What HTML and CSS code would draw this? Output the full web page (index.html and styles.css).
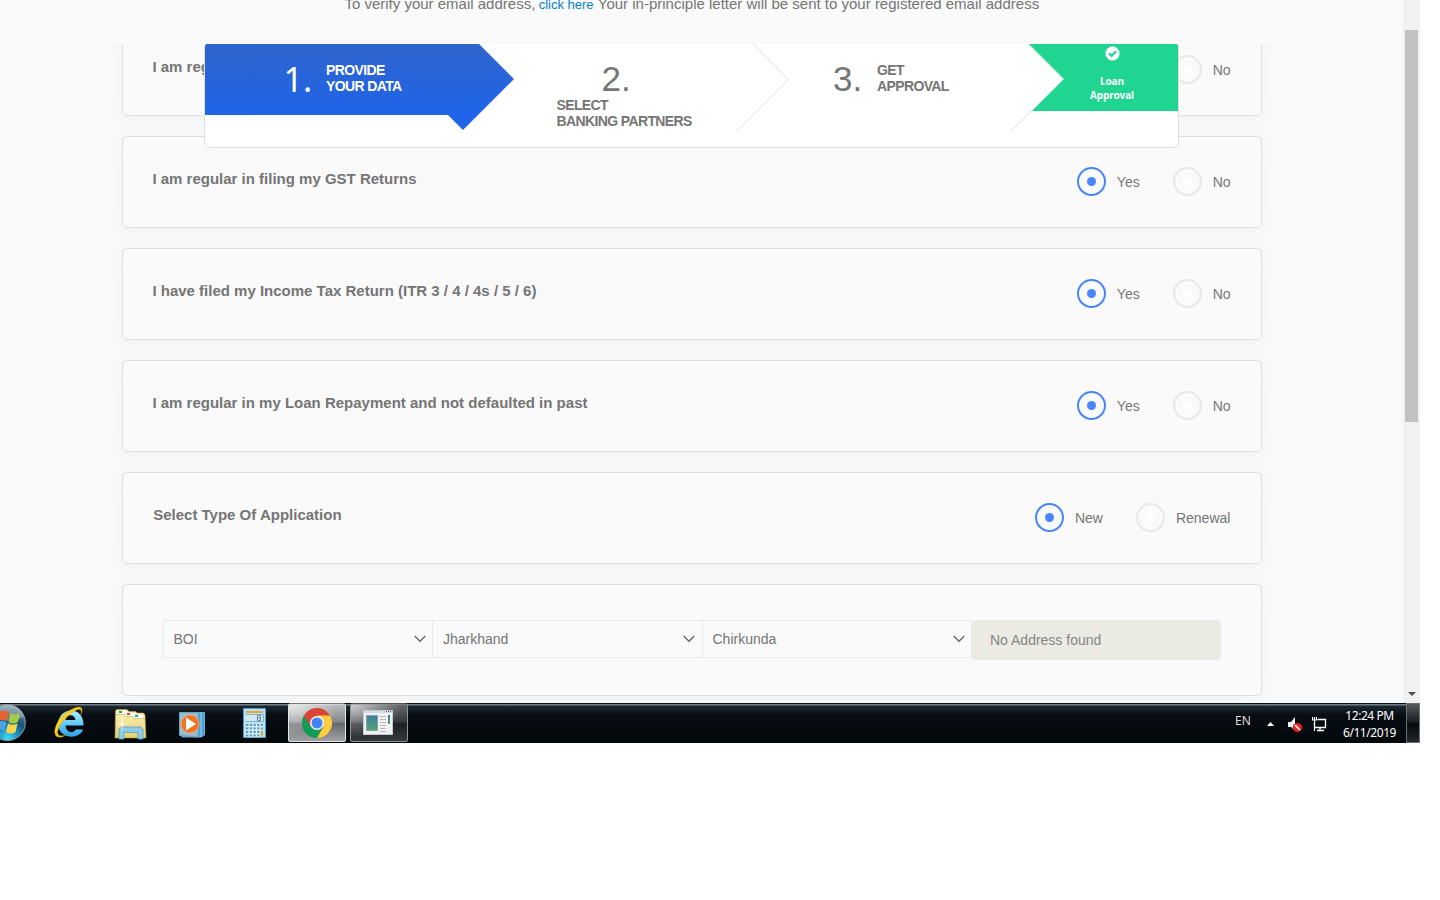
FILE: index.html
```html
<!DOCTYPE html>
<html lang="en">
<head>
<meta charset="utf-8">
<title>Loan application</title>
<link rel="stylesheet" href="styles.css">
</head>
<body>
<div class="screen">
  <div class="browser">
    <main class="page">
      <header class="notice"><span class="n1">To verify your email address,</span><a class="link">click here</a><span class="n2">Your in-principle letter will be sent to your registered email address</span></header>
      <section class="content">
        <div class="cards">
          <div class="card"><h3>I am regular in EPF</h3><div class="radios"><label><i class="radio"></i><span>No</span></label></div></div>
          <div class="card"><h3>I am regular in filing my GST Returns</h3><div class="radios"><label><i class="radio on"></i><span>Yes</span></label><label><i class="radio"></i><span>No</span></label></div></div>
          <div class="card"><h3>I have filed my Income Tax Return (ITR 3 / 4 / 4s / 5 / 6)</h3><div class="radios"><label><i class="radio on"></i><span>Yes</span></label><label><i class="radio"></i><span>No</span></label></div></div>
          <div class="card"><h3>I am regular in my Loan Repayment and not defaulted in past</h3><div class="radios"><label><i class="radio on"></i><span>Yes</span></label><label><i class="radio"></i><span>No</span></label></div></div>
          <div class="card type"><h3>Select Type Of Application</h3><div class="radios"><label><i class="radio on"></i><span>New</span></label><label><i class="radio"></i><span>Renewal</span></label></div></div>
          <div class="card fields">
            <div class="select">BOI<svg width="12" height="8" viewBox="0 0 12 8"><path d="M.7 1 6 6.300 11.300 1"/></svg></div>
            <div class="select">Jharkhand<svg width="12" height="8" viewBox="0 0 12 8"><path d="M.7 1 6 6.300 11.300 1"/></svg></div>
            <div class="select">Chirkunda<svg width="12" height="8" viewBox="0 0 12 8"><path d="M.7 1 6 6.300 11.300 1"/></svg></div>
            <div class="address">No Address found</div>
          </div>
        </div>
        <div class="wizard">
          <svg class="shapes" width="973" height="103" viewBox="0 0 973 103">
            <defs><linearGradient id="blue" x1="0" y1="0" x2="0" y2="71" gradientUnits="userSpaceOnUse"><stop offset="0" stop-color="#2f64cb"/><stop offset="1" stop-color="#2064ea"/></linearGradient></defs>
            <path fill="url(#blue)" d="M0 0H274L309 35 258 86 243 71H0Z"/>
            <path class="line" d="M548 0 583.500 35.500 532 87M823 0 858.500 35.500 806 87"/>
            <path fill="#20d491" d="M824 0H973V67H827L859 35Z"/>
          </svg>
          <div class="step s1"><b class="num">1.</b><span>PROVIDE<br>YOUR DATA</span></div>
          <div class="step s2"><b class="num">2.</b><span>SELECT<br>BANKING PARTNERS</span></div>
          <div class="step s3"><b class="num">3.</b><span>GET<br>APPROVAL</span></div>
          <div class="done">
            <svg width="15" height="15" viewBox="0 0 15 15"><circle cx="7.500" cy="7.500" r="6.800" fill="#fff" stroke="#fff" stroke-dasharray="2 1.560"/><path d="M4 7.400 6.600 9.900 11 5.200" fill="none" stroke="#20d491" stroke-width="2.200"/></svg>
            <span>Loan<br>Approval</span>
          </div>
        </div>
      </section>
    </main>
    <div class="scrollbar"><div class="thumb"></div><div class="down"></div></div>
  </div>
  <footer class="taskbar">
    <svg class="icons" width="420" height="40" viewBox="0 0 420 40">
      <defs>
        <radialGradient id="orb" cx=".5" cy=".95" r=".95"><stop offset="0" stop-color="#3fe0f5"/><stop offset=".35" stop-color="#1c86b8"/><stop offset=".6" stop-color="#1a5076"/><stop offset="1" stop-color="#8fa4ae"/></radialGradient>
        <linearGradient id="ie" x1="0" y1="0" x2="0" y2="1"><stop offset="0" stop-color="#b9f1ff"/><stop offset=".5" stop-color="#62cdfa"/><stop offset="1" stop-color="#2f9fe4"/></linearGradient>
        <linearGradient id="folder" x1="0" y1="0" x2="0" y2="1"><stop offset="0" stop-color="#fcf3b9"/><stop offset="1" stop-color="#e8d070"/></linearGradient>
        <linearGradient id="glass" x1="0" y1="0" x2="0" y2="1"><stop offset="0" stop-color="#b9bbbc"/><stop offset=".48" stop-color="#85888a"/><stop offset=".52" stop-color="#65696b"/><stop offset="1" stop-color="#a2a5a7"/></linearGradient>
        <linearGradient id="dark" x1="0" y1="0" x2="0" y2="1"><stop offset="0" stop-color="#64686a"/><stop offset=".48" stop-color="#34383b"/><stop offset=".52" stop-color="#1b2023"/><stop offset="1" stop-color="#34393c"/></linearGradient>
        <radialGradient id="shine" cx="0" cy="0" r=".9"><stop offset="0" stop-color="#fff" stop-opacity=".7"/><stop offset="1" stop-color="#fff" stop-opacity="0"/></radialGradient>
        <linearGradient id="photo" x1="0" y1="0" x2="0" y2="1"><stop offset="0" stop-color="#397ea7"/><stop offset="1" stop-color="#55a66d"/></linearGradient>
      </defs>
      <circle cx="7.500" cy="19.700" r="17.800" fill="url(#orb)" stroke="#8ba1aa"/>
      <path d="M-9 15A17 17 0 0 1 24 14Q8 21-9 15" fill="#d3e4e9" opacity=".3"/>
      <path d="M-3 10Q3 6 9 9L7 18Q1 15-5 19Z" fill="#e8602c"/><path d="M10.500 10Q15 13 20 10L18 19Q13 22 8.500 19Z" fill="#a5cc45"/><path d="M-5 20Q1 16.500 6.500 19.500L4.500 28Q0 25-6 28Z" fill="#4ba4e2"/><path d="M8 20.500Q12 23 17.500 20.500L15.500 29Q11 32 6 29Z" fill="#fbd84a"/>
      <path fill-rule="evenodd" d="M83.500 22.500H65.500C66 30 73.500 31 75.500 26.500H83C80 36.500 60 37 58 22C57 4 84 1 83.500 22.500ZM65.500 17H75.500C75 10.500 66.500 10.500 65.500 17Z" fill="url(#ie)"/>
      <path d="M80.500 13C85 3 80 1 67 9C56 16 51 32 58 34Q62 35 66 32C57 35 55 30 61 21C67 12 77 5 80.500 6.500Q82 8 80.500 13Z" fill="#f9ce25" stroke="#c18b09" stroke-width=".4"/>
      <path d="M115.500 8 116.500 6.500H127L129 8.500H136L137 10H143.500L145 12 146 35H115Z" fill="url(#folder)" stroke="#b6984c" stroke-width=".6"/>
      <path d="M118 8h9v3h-9M126 10h9v3h-9M134 12h9v3h-9" fill="#fff"/><path d="M119 8h3v2h-3" fill="#0bb642"/><path d="M127 10h3v2h-3" fill="#d54331"/><path d="M135 12h3v2h-3" fill="#298fd4"/>
      <path d="M116 11.500H124L126 13.500H132L134 15.500H145" stroke="#cdb768" fill="none" stroke-width=".7"/>
      <path d="M119 36V26Q120 24 123 24H139Q142 24 143 26V36H138V29.500H124V36Z" fill="#8fccea" stroke="#52a1bd" stroke-width=".8"/><path d="M122 13 123 20 129 21 123 22 122 29 121 22 116 21 121 20Z" fill="#fff" opacity=".7"/>
      <path d="M182 9.500H204.500V32L201 34H182Z" fill="#4ba3d2" stroke="#8ed7f2" stroke-width=".7"/><path d="M201 10V34" stroke="#b1e2f3" stroke-width=".8"/><path d="M179.500 9.500H198.500L198 34 179.500 32.500Z" fill="#94bed2" stroke="#66a4c3"/><circle cx="190" cy="21" r="9" fill="#f17321" stroke="#fba66b"/><path d="M186 14.500 196 21 186 27.500Z" fill="#fff"/>
      <path d="M243.500 5.500H265.500V34.500H243.500Z" fill="#b9e2f4" stroke="#4c9cc8"/><path d="M246 8h17v2h-17" fill="#f4a12a"/><path d="M245.500 11.500h18v7h-18" fill="#d4e8f1" stroke="#6699b5" stroke-width=".7"/><path d="M257.500 12.500h3v5h-3zM257.500 15h3" fill="none" stroke="#54748c" stroke-width=".8"/>
      <path d="M246 22.500h18M246 26h18M246 29.500h14M246 33h14" stroke="#e8f6fc" stroke-width="2.700"/><path d="M246 22h18M246 25.500h18M246 29h14M246 32.500h14" stroke="#5b9cc0" stroke-width="1.900" stroke-dasharray="2.400 1.300"/><path d="M261 28h2v5h-2" fill="#f2a12a"/>
      <rect x="288.500" y="1" width="57" height="37.500" rx="1.500" fill="url(#glass)"/><rect x="288.500" y="1" width="57" height="37.500" rx="1.500" fill="url(#shine)" stroke="#e3e5e6"/>
      <circle cx="317" cy="20" r="15" fill="#db4437"/><path d="M304 12.500A15 15 0 0 0 317 35L323.500 23.800 317 27 310.500 23.500Z" fill="#0f9d58"/><path d="M317 12.500H330A15 15 0 0 1 317 35L323.500 23.800Z" fill="#ffcd40"/><circle cx="317" cy="20" r="7" fill="#f1f1f1"/><circle cx="317" cy="20" r="5.500" fill="#4285f4"/>
      <rect x="350.500" y="1" width="57" height="37.500" rx="1.500" fill="url(#dark)"/><rect x="350.500" y="1" width="57" height="37.500" rx="1.500" fill="url(#shine)" stroke="#8f9293"/>
      <path d="M363.500 7.500H392.500V31.500H363.500Z" fill="#f1f1f3" stroke="#c3c8cd"/><path d="M364 8h28v2h-28" fill="#d7dce4"/><path d="M386 8.500h5" stroke="#415d86" stroke-dasharray="1 1"/><path d="M366.500 12.500h11v15h-11z" fill="url(#photo)" stroke="#8e9da7"/><path d="M380 13.500h6M380 16.500h6M380 19.500h6M380 22.500h6M380 25.500h6M380 28.500h6" stroke="#b5b9bb"/><path d="M388 12h2v9h-2" fill="url(#photo)"/>
    </svg>
    <div class="tray">
      <span class="lang">EN</span>
      <svg width="60" height="20" viewBox="0 0 60 20"><path d="M0 12 3.500 8 7 12Z" fill="#fff"/><path d="M21 8h3l4-5v14l-4-4h-3z" fill="#f4f4f4"/><circle cx="30.500" cy="13.500" r="4.500" fill="#e32424" stroke="#a51414" stroke-width=".6"/><path d="m28 11 5 5" stroke="#fff" stroke-width="1.700"/><path d="M50.500 5.500h8v8H47.500v-5M53 13v3M50 16.500h7" fill="none" stroke="#fff" stroke-width="1.300"/><path d="M45.500 3v3h4V3M47.500 3v14" fill="none" stroke="#fff" stroke-width="1.100"/></svg>
      <div class="clock">12:24 PM<br>6/11/2019</div>
    </div>
    <div class="desktop"></div>
  </footer>
</div>
</body>
</html>
```
FILE: styles.css
```css
* { box-sizing: border-box; }
body { margin: 0; background: #fff; color: #757575; font: 14px/20px "Liberation Sans", Arial, sans-serif; }
svg { display: block; flex: none; }
.screen { width: 1420px; height: 743px; overflow: hidden; }
.browser { display: flex; height: 703px; overflow: hidden; }
.page { width: 1403px; height: 703px; background: #fafafa; }
.notice { display: flex; height: 48px; margin-top: -4px; padding-left: 344.400px; white-space: nowrap; font-size: 15px; line-height: 16px; }
.link { color: #0381c9; font-size: 13px; line-height: 18px; margin: 0 4.200px 0 3.400px; }
.content { position: relative; height: 659px; overflow: hidden; padding-left: 122px; }
.cards { display: flex; flex-direction: column; gap: 20px; margin-top: -20px; width: 1140px; }
.card { height: 92px; flex: none; padding: 0 30.400px 0 29.400px; display: flex; justify-content: space-between; background: #fafafa; border: 1px solid #dfdfdf; border-radius: 5px; box-shadow: 0 3px 20px rgba(0,0,0,.045); }
.card.type { padding-left: 30.200px; padding-right: 30.600px; }
.card h3 { margin: 32px 0 0; height: 20px; font-size: 15px; line-height: 20px; white-space: nowrap; }
.radios { display: flex; gap: 33px; margin-top: 30px; height: 29px; }
.radios label { display: flex; align-items: flex-start; gap: 11px; }
.radios span { line-height: 30px; }
.radio { width: 29px; height: 29px; border: 2px solid #e8e8e8; border-radius: 50%; display: flex; align-items: center; justify-content: center; }
.radio::after { content: ""; width: 9px; height: 9px; border-radius: 50%; background: #fff; }
.radio.on { border-color: #4986fc; }
.radio.on::after { background: #4986fc; }
.card.fields { height: 112px; justify-content: flex-start; padding: 35px 40px 0; }
.select { width: 270px; height: 38px; margin-right: -.5px; padding: 0 6.500px 0 9.500px; border: 1px solid #e7e9ea; display: flex; align-items: center; justify-content: space-between; flex: none; }
.select + .select { border-left-color: transparent; }
.select path { fill: none; stroke: #696969; stroke-width: 1.400; }
.address { width: 250px; height: 40px; background: #ebebe4; border: 1px solid #e7e9ea; border-radius: 4px; padding-left: 17.500px; line-height: 38px; color: #858585; }
.wizard { position: absolute; left: 204px; top: 0; width: 975px; height: 104px; background: #fff; border: 1px solid #dfdfdf; border-top: 0; border-radius: 3px 3px 5px 5px; display: flex; overflow: hidden; }
.shapes { position: absolute; left: 0; top: 0; }
.line { fill: none; stroke: #dedede; }
.step { position: relative; display: flex; flex: none; font-size: 14px; line-height: 16px; font-weight: bold; white-space: nowrap; }
.step span { padding-top: 18px; letter-spacing: -.62px; }
.num { font-size: 35px; font-weight: normal; line-height: 40px; padding-top: 15px; }
.s1 { width: 351.500px; padding-left: 76.500px; color: #fff; }
.s1 .num { width: 44.500px; padding-left: 2px; font-family: "Noto Sans", sans-serif; font-size: 34px; }
.s2 { width: 276.500px; flex-direction: column; }
.s2 .num { padding-left: 45px; }
.s2 span { padding-top: 0; margin-top: -2px; }
.s3 { width: 197px; }
.s3 .num { width: 44px; }
.done { position: relative; width: 148px; margin-left: 8px; flex: none; display: flex; flex-direction: column; align-items: center; color: #fff; font: bold 10px/14px "Open Sans", sans-serif; text-align: center; padding-top: 2px; letter-spacing: -.15px; }
.done span { margin-top: 13px; }
.scrollbar { width: 17px; height: 703px; background: #f1f1f1; display: flex; flex-direction: column; justify-content: space-between; align-items: center; padding: 30px 0 7px; }
.thumb { width: 13px; height: 392px; background: #c1c1c1; }
.down { border: 4px solid transparent; border-top-color: #505050; border-bottom: 0; }
.taskbar { height: 40px; display: flex; justify-content: space-between; background: linear-gradient(#0a1017 0 1px, #727f88 1px 2px, #1d2932 3px, #080d14 12px, #03080b); color: #fff; }
.tray { display: flex; margin-left: auto; font: 12px/17px "Noto Sans", sans-serif; }
.lang { width: 32px; padding-top: 9px; color: #ded9cf; }
.tray svg { margin-top: 11px; }
.clock { width: 79px; padding: 4px 0 0 6px; text-align: center; white-space: nowrap; letter-spacing: -.45px; }
.desktop { width: 14px; border: 1px solid #687177; background: linear-gradient(#555b5f, #15191c 50%, #05090c 50%, #23282b); }
```
